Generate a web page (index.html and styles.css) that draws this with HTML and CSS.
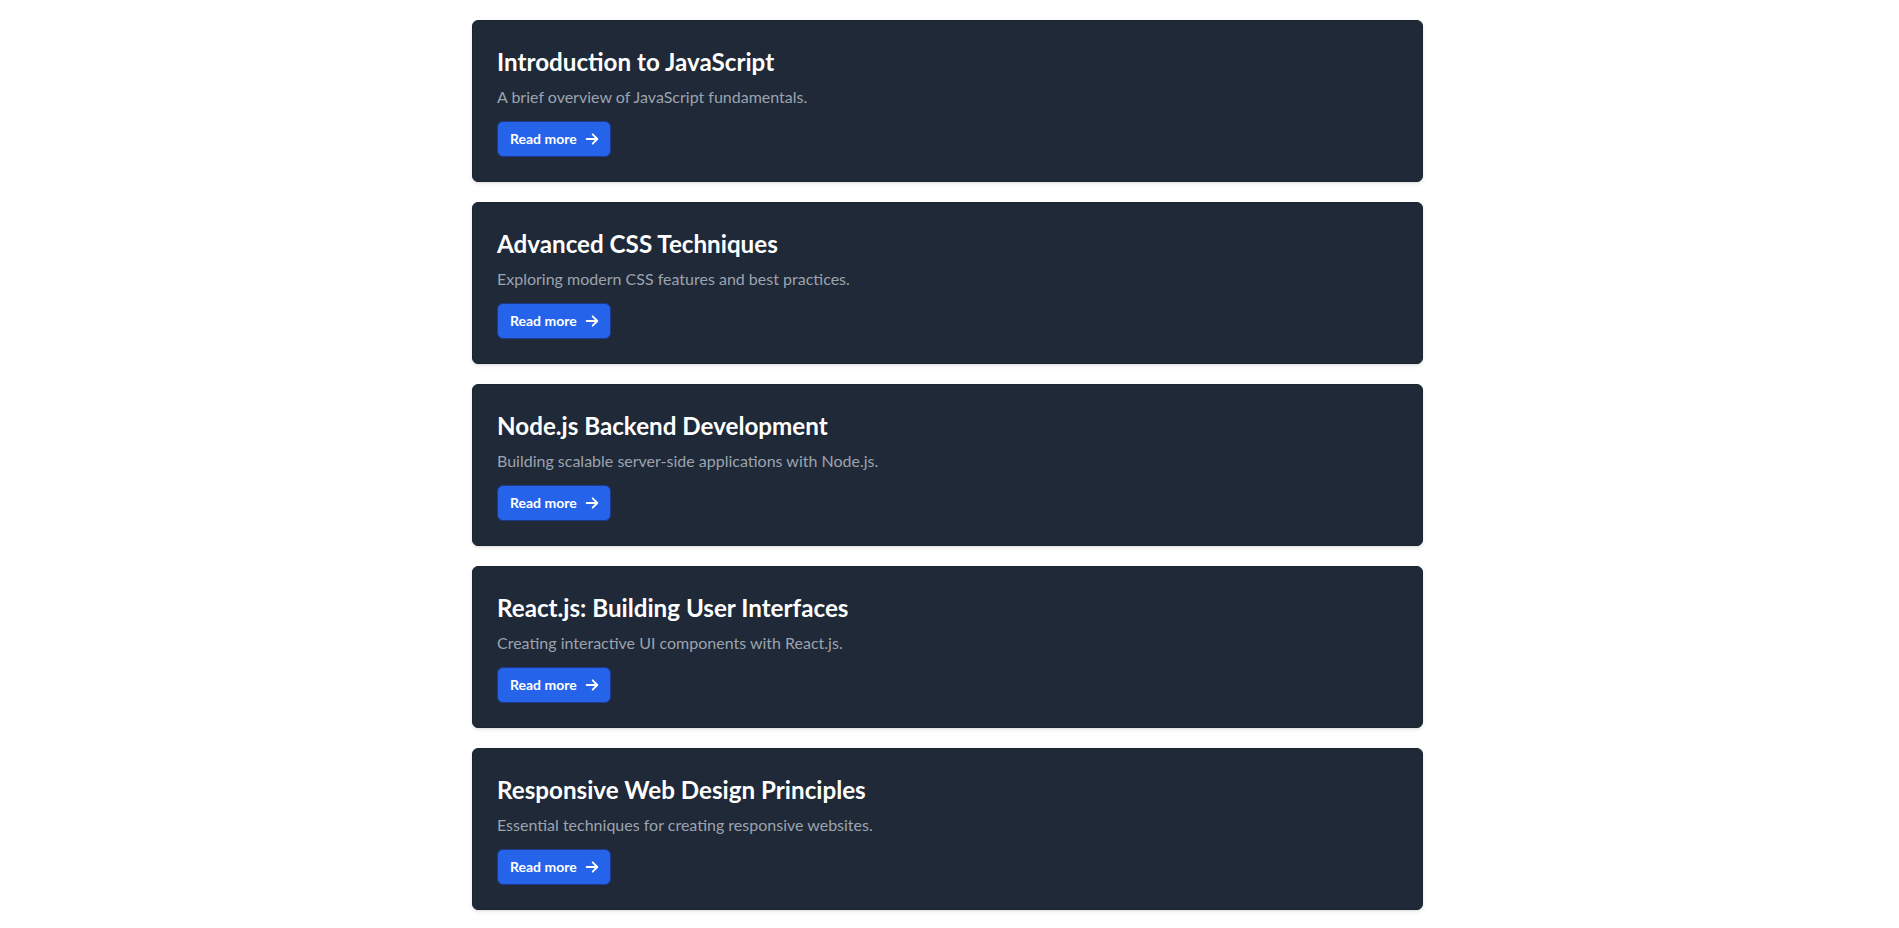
FILE: index.html
```html
<!DOCTYPE html>
<html lang="en">
<head>
<meta charset="utf-8">
<title>Articles</title>
<link rel="stylesheet" href="styles.css">
</head>
<body>
<main class="list">
  <article class="card">
    <h2 class="card-title">Introduction to JavaScript</h2>
    <p class="card-text">A brief overview of JavaScript fundamentals.</p>
    <a class="btn" href="#">Read more<svg class="btn-icon" viewBox="0 0 24 24" fill="none" stroke="currentColor" stroke-width="2.75" stroke-linecap="round" stroke-linejoin="round"><path d="M4 12h16M13 5l7 7-7 7"/></svg></a>
  </article>
  <article class="card">
    <h2 class="card-title">Advanced CSS Techniques</h2>
    <p class="card-text">Exploring modern CSS features and best practices.</p>
    <a class="btn" href="#">Read more<svg class="btn-icon" viewBox="0 0 24 24" fill="none" stroke="currentColor" stroke-width="2.75" stroke-linecap="round" stroke-linejoin="round"><path d="M4 12h16M13 5l7 7-7 7"/></svg></a>
  </article>
  <article class="card">
    <h2 class="card-title">Node.js Backend Development</h2>
    <p class="card-text">Building scalable server-side applications with Node.js.</p>
    <a class="btn" href="#">Read more<svg class="btn-icon" viewBox="0 0 24 24" fill="none" stroke="currentColor" stroke-width="2.75" stroke-linecap="round" stroke-linejoin="round"><path d="M4 12h16M13 5l7 7-7 7"/></svg></a>
  </article>
  <article class="card">
    <h2 class="card-title">React.js: Building User Interfaces</h2>
    <p class="card-text">Creating interactive UI components with React.js.</p>
    <a class="btn" href="#">Read more<svg class="btn-icon" viewBox="0 0 24 24" fill="none" stroke="currentColor" stroke-width="2.75" stroke-linecap="round" stroke-linejoin="round"><path d="M4 12h16M13 5l7 7-7 7"/></svg></a>
  </article>
  <article class="card">
    <h2 class="card-title">Responsive Web Design Principles</h2>
    <p class="card-text">Essential techniques for creating responsive websites.</p>
    <a class="btn" href="#">Read more<svg class="btn-icon" viewBox="0 0 24 24" fill="none" stroke="currentColor" stroke-width="2.75" stroke-linecap="round" stroke-linejoin="round"><path d="M4 12h16M13 5l7 7-7 7"/></svg></a>
  </article>
</main>
</body>
</html>
```
FILE: styles.css
```css
* { box-sizing: border-box; }
html, body { margin: 0; padding: 0; background: #ffffff; }
body {
  font-family: "Lato", "Noto Sans", sans-serif;
  padding-right: 4px;
}
.list {
  width: 951px;
  margin: 0 auto;
  padding: 20px 0 18px;
  display: flex;
  flex-direction: column;
  gap: 20px;
}
.card {
  background: #1f2937;
  border: 1px solid #1c2431;
  border-radius: 6px;
  padding: 24px;
  box-shadow: 0 2px 4px rgba(0,0,0,0.08), 0 1px 2px rgba(0,0,0,0.06);
  display: flex;
  flex-direction: column;
  align-items: flex-start;
}
.card-title {
  margin: 0 0 7px;
  padding-top: 1px;
  font-size: 24.2px;
  line-height: 32px;
  font-weight: 700;
  color: #ffffff;
}
.card-text {
  margin: 0 0 12px;
  font-size: 16px;
  line-height: 24px;
  color: #9ca3af;
}
.btn {
  display: inline-flex;
  align-items: center;
  height: 36px;
  padding: 0 10px 0 12px;
  background: #2563eb;
  border: 1px solid #1e3a8a;
  border-radius: 6px;
  color: #ffffff;
  font-size: 14px;
  line-height: 20px;
  font-weight: 700;
  text-decoration: none;
}
.btn-icon {
  width: 16px;
  height: 16px;
  margin-left: 7px;
}
```
